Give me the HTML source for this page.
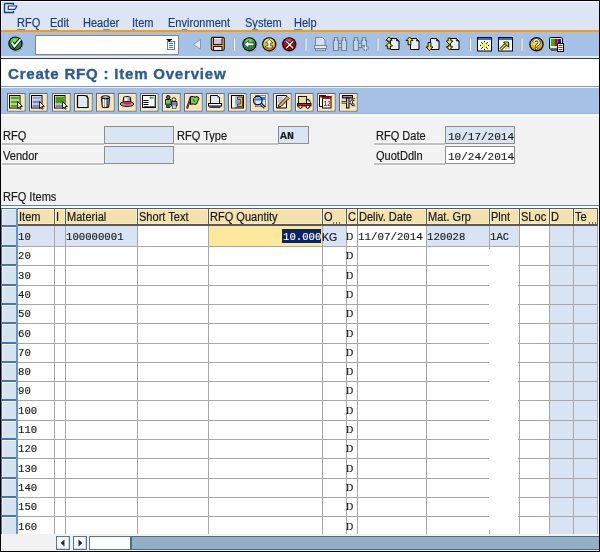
<!DOCTYPE html>
<html><head><meta charset="utf-8">
<style>
*{margin:0;padding:0;box-sizing:border-box}
html,body{width:600px;height:552px;overflow:hidden;background:#000}
body{position:relative;will-change:transform;font-family:"Liberation Sans",sans-serif;font-size:11px;color:#1a1a1a}
.a{position:absolute}
.t{position:absolute;white-space:nowrap;line-height:13px;font-size:12px;transform:scaleX(.92);transform-origin:0 0;-webkit-text-stroke:0.2px currentColor}
.m{font-family:"Liberation Mono",monospace;transform:none;-webkit-text-stroke:0.15px currentColor}
.ell{font-size:7px;letter-spacing:-0.2px}
.menu{color:#1d3f7d}
.menu u{text-decoration:none;position:relative}
.menu u:after{content:"";position:absolute;left:0;right:0;top:13px;height:1px;background:#6a8cc0}
.btn{position:absolute;top:93px;width:19px;height:18px;background:#f5e3b5;border:1px solid #8a8470}
.btn svg{position:absolute;left:0;top:0}
.sep{position:absolute;top:38px;width:2px;height:13px;background:linear-gradient(90deg,#e8eef6 50%,#c9d8ec 50%)}
.lbl{position:absolute;height:2px;background:#c0c0c0;box-shadow:0 -1px 0 #f8f8f8,0 1px 0 #f8f8f8}
.fld{position:absolute;height:18px;background:#d9e5f3;border:1px solid #8e8e8e}
.hc{position:absolute;top:208px;height:18px;background:#f4e3b3;border-top:1px solid #5a5a5a;border-bottom:1px solid #5a5a5a;border-right:1px solid #5a5a5a;box-shadow:inset 1px 1px 0 #fff3d2}
</style></head><body>
<!-- window background -->
<div class="a" style="left:1px;top:1px;width:598px;height:550px;background:#f2f2f2"></div>
<!-- menubar -->
<div class="a" style="left:1px;top:1px;width:598px;height:29px;background:#dbe5f3;border-left:1px solid #f4f8fc;border-top:1px solid #f4f8fc"></div>
<svg class="a" style="left:0;top:0" width="20" height="16" viewBox="0 0 20 16">
<path d="M4.5 3.5h9v1.8M4.5 3.5v9h9v-1.8" fill="none" stroke="#163c8c" stroke-width="1.3"/>
<path d="M8.3 6h8.7l-2.2 3.4h-6.5z" fill="#fff" stroke="#163c8c" stroke-width="1.2" stroke-linejoin="round"/>
</svg>
<div class="t menu" style="left:17px;top:17px"><u>R</u>FQ</div>
<div class="t menu" style="left:50px;top:17px"><u>E</u>dit</div>
<div class="t menu" style="left:83px;top:17px">Hea<u>d</u>er</div>
<div class="t menu" style="left:132px;top:17px"><u>I</u>tem</div>
<div class="t menu" style="left:168px;top:17px">En<u>v</u>ironment</div>
<div class="t menu" style="left:245px;top:17px">S<u>y</u>stem</div>
<div class="t menu" style="left:294px;top:17px"><u>H</u>elp</div>
<!-- orange line -->
<div class="a" style="left:1px;top:30px;width:598px;height:2px;background:#fb9a0c"></div>
<!-- system toolbar -->
<div class="a" style="left:1px;top:32px;width:598px;height:24px;background:#a5c1e5"></div>
<div class="a" style="left:1px;top:56px;width:598px;height:2px;background:#e6eef8"></div>
<div class="a" style="left:1px;top:58px;width:598px;height:1px;background:#3a3a3a"></div>
<!-- title area -->
<div class="a" style="left:1px;top:59px;width:598px;height:27px;background:#fff"></div>
<div class="t" style="left:8px;top:66px;font-size:15px;line-height:16px;font-weight:bold;color:#2b5b90;transform:none;letter-spacing:0.8px;-webkit-text-stroke:0.35px #2b5b90">Create RFQ : Item Overview</div>
<div class="a" style="left:1px;top:86px;width:598px;height:1px;background:#7f9ebf"></div><div class="a" style="left:1px;top:87px;width:598px;height:1px;background:#f2f6fb"></div>
<!-- app toolbar -->
<div class="a" style="left:1px;top:88px;width:598px;height:26px;background:#a5c1e5"></div>
<div class="a" style="left:1px;top:113px;width:598px;height:1px;background:#97b6dc"></div><div class="a" style="left:1px;top:114px;width:598px;height:2px;background:#f7f9fc"></div>

<!-- header fields -->
<div class="t" style="left:3px;top:130px">RFQ</div>
<div class="lbl" style="left:2px;top:143px;width:102px"></div>
<div class="fld" style="left:104px;top:126px;width:70px"></div>
<div class="t" style="left:177px;top:130px">RFQ Type</div>
<div class="lbl" style="left:174px;top:143px;width:104px"></div>
<div class="fld" style="left:278px;top:126px;width:31px"></div>
<div class="t m" style="left:280px;top:129px;font-size:11.5px;font-weight:bold">AN</div>
<div class="t" style="left:3px;top:150px">Vendor</div>
<div class="lbl" style="left:2px;top:163px;width:102px"></div>
<div class="fld" style="left:104px;top:146px;width:70px"></div>

<div class="t" style="left:376px;top:130px">RFQ Date</div>
<div class="lbl" style="left:374px;top:143px;width:71px"></div>
<div class="fld" style="left:445px;top:126px;width:70px"></div>
<div class="t m" style="left:448px;top:131px;font-size:11px">10/17/2014</div>
<div class="t" style="left:376px;top:150px">QuotDdln</div>
<div class="lbl" style="left:374px;top:163px;width:71px"></div>
<div class="fld" style="left:445px;top:146px;width:70px;background:#fff"></div>
<div class="t m" style="left:448px;top:151px;font-size:11px">10/24/2014</div>

<div class="t" style="left:3px;top:191px">RFQ Items</div>

<!-- table -->
<svg class="a" style="left:0;top:32px" width="600" height="26" viewBox="0 32 600 26">
<defs>
<radialGradient id="gG" cx="0.45" cy="0.25" r="0.8"><stop offset="0" stop-color="#8ef05a"/><stop offset="0.45" stop-color="#2fb52c"/><stop offset="1" stop-color="#0d6a4a"/></radialGradient>
<radialGradient id="gY" cx="0.45" cy="0.25" r="0.8"><stop offset="0" stop-color="#fffa9a"/><stop offset="0.45" stop-color="#f6d20a"/><stop offset="1" stop-color="#d07a00"/></radialGradient>
<radialGradient id="gR" cx="0.45" cy="0.25" r="0.8"><stop offset="0" stop-color="#ff6a6a"/><stop offset="0.45" stop-color="#e00010"/><stop offset="1" stop-color="#900010"/></radialGradient>
</defs>

<!-- enter -->
<circle cx="16.6" cy="44.8" r="7" fill="#9c94cc" opacity="0.75"/>
<circle cx="15.4" cy="43.6" r="7.1" fill="#000"/>
<circle cx="15.4" cy="43.6" r="6" fill="url(#gG)"/>
<path d="M11.8 42.5l2.6 3.8 6.2-7" fill="none" stroke="#000" stroke-width="3.6"/>
<path d="M11.8 42.5l2.6 3.8 6.2-7" fill="none" stroke="#fff" stroke-width="2"/>
<!-- command field -->
<rect x="35.5" y="35.5" width="143" height="19" fill="#fff" stroke="#8a847e"/>
<rect x="167.5" y="41.5" width="7" height="8" fill="#f4f8fc" stroke="#6284aa"/>
<path d="M169 43.5h4M169 45.5h4M169 47.5h4" stroke="#4f78a8" stroke-width="1"/>
<path d="M166 39h6.5l-3.25 3z" fill="#000"/>
<!-- collapse -->
<path d="M200.5 39.5v9.8l-7-4.9z" fill="#e4e8ee" stroke="#8c98a6" stroke-width="1"/>
<!-- save -->
<rect x="210.8" y="36.8" width="14" height="14" rx="2" fill="#111"/>
<rect x="211.8" y="37.8" width="12" height="12" rx="1" fill="#f8a818"/>
<rect x="213.5" y="37.5" width="8.5" height="7" fill="#d2bfe2" stroke="#111" stroke-width="1"/>
<rect x="214" y="38" width="7.5" height="1" fill="#f4eefa"/>
<rect x="213.5" y="46.5" width="8.5" height="4" fill="#ede2f4" stroke="#111" stroke-width="1"/>
<!-- sep -->
<rect x="233" y="38.6" width="1" height="12.4" fill="#b9aa9a"/><rect x="234" y="38.6" width="1" height="12.4" fill="#fafafa"/>
<!-- back -->
<circle cx="250.5" cy="45.3" r="7" fill="#9c94cc" opacity="0.6"/>
<circle cx="249.4" cy="44.3" r="7.1" fill="#000"/>
<circle cx="249.4" cy="44.3" r="6" fill="url(#gG)"/>
<path d="M244.5 44.3l4.2-4v2.6h5.2v2.8h-5.2v2.6z" fill="#fff" stroke="#000" stroke-width="0.6"/>
<!-- exit -->
<circle cx="270.3" cy="45.3" r="7" fill="#9c94cc" opacity="0.6"/>
<circle cx="269.2" cy="44.3" r="7.1" fill="#000"/>
<circle cx="269.2" cy="44.3" r="6" fill="url(#gY)"/>
<path d="M269.2 39.3l3.6 3.6h-2.2v3h2v2h-6.8v-2h2v-3h-2.2z" fill="#fff" stroke="#000" stroke-width="0.6"/>
<!-- cancel -->
<circle cx="290.3" cy="45.3" r="7" fill="#9c94cc" opacity="0.6"/>
<circle cx="289.2" cy="44.3" r="7.1" fill="#000"/>
<circle cx="289.2" cy="44.3" r="6" fill="url(#gR)"/>
<path d="M286.2 41.3l7 7M293.2 41.3l-7 7" stroke="#000" stroke-width="3"/>
<path d="M286.2 41.3l7 7M293.2 41.3l-7 7" stroke="#fff" stroke-width="1.5"/>
<!-- sep -->
<rect x="304.5" y="38.6" width="1" height="12.4" fill="#b9aa9a"/><rect x="305.5" y="38.6" width="1" height="12.4" fill="#fafafa"/>
<!-- print disabled -->
<path d="M315.5 37.5h7l2.5 2.5v5.5h-9.5z" fill="#d6def0" stroke="#6c8a98"/>
<rect x="314.5" y="45.5" width="12" height="3" fill="#e4eaf4" stroke="#6c8a98"/>
<rect x="315.5" y="48.5" width="10" height="2" fill="#c4d0e4" stroke="#6c8a98"/>
<!-- find disabled -->
<g fill="#c8d6ee" stroke="#6a8896" stroke-width="1.2">
<path d="M334.5 37.5h3v3h1v10h-5v-10h1z"/><path d="M342.5 37.5h3v3h1v10h-5v-10h1z"/><rect x="338.5" y="43.5" width="3" height="4"/>
<path d="M354.5 37.5h3v3h1v10h-5v-10h1z"/><path d="M362.5 37.5h3v3h1v5h-5v-5h1z"/><rect x="358.5" y="43.5" width="3" height="4"/>
</g>
<path d="M365.5 45v6M362.5 48h6" stroke="#6a8896" stroke-width="3"/>
<path d="M365.5 45.5v5M363 48h5" stroke="#eef2f8" stroke-width="1.2"/>
<!-- sep -->
<rect x="376.5" y="38.6" width="1" height="12.4" fill="#b9aa9a"/><rect x="377.5" y="38.6" width="1" height="12.4" fill="#fafafa"/>
<!-- page icons -->
<g stroke="#000" stroke-width="1">
<path d="M390.5 38.5h6l2.5 2.5v8.5h-8.5z" fill="#e6eef8"/><path d="M396.5 38.5v2.5h2.5" fill="#334" stroke-width="0.6"/>
<path d="M410.5 38.5h6l2.5 2.5v8.5h-8.5z" fill="#e6eef8"/><path d="M416.5 38.5v2.5h2.5" fill="#334" stroke-width="0.6"/>
<path d="M430.5 38.5h6l2.5 2.5v8.5h-8.5z" fill="#e6eef8"/><path d="M436.5 38.5v2.5h2.5" fill="#334" stroke-width="0.6"/>
<path d="M450.5 38.5h6l2.5 2.5v8.5h-8.5z" fill="#e6eef8"/><path d="M456.5 38.5v2.5h2.5" fill="#334" stroke-width="0.6"/>
</g>
<g fill="#ffe600" stroke="#000" stroke-width="0.9" stroke-linejoin="round">
<path d="M389 37l3.2 3.2h-2v1.8h-2.4v-1.8h-2z"/>
<path d="M389 42.5l3.5 3.5h-2.1v2.8h-2.8v-2.8h-2.1z"/>
<path d="M409.5 37l3.5 3.5h-2.1v4.3h-2.8v-4.3h-2.1z"/>
<path d="M429.5 50.5l3.5-3.5h-2.1v-4.5h-2.8v4.5h-2.1z"/>
<path d="M449.5 50l3.2-3.2h-2v-1.8h-2.4v1.8h-2z"/>
<path d="M449.5 44.5l3.5-3.5h-2.1v-2.8h-2.8v2.8h-2.1z"/>
</g>
<!-- sep -->
<rect x="469" y="38.6" width="1" height="12.4" fill="#b9aa9a"/><rect x="470" y="38.6" width="1" height="12.4" fill="#fafafa"/>
<!-- create session -->
<rect x="477.5" y="37.5" width="14" height="13.5" fill="#fff" stroke="#000"/>
<rect x="478" y="38" width="13" height="2" fill="#2e6fd0"/>
<path d="M484.5 41v9M480 45.5h9M481.3 42.3l6.4 6.4M487.7 42.3l-6.4 6.4" stroke="#111" stroke-width="1"/>
<path d="M484.5 42v7M481 45.5h7" stroke="#f8e800" stroke-width="1.4"/>
<circle cx="484.5" cy="45.5" r="2.2" fill="#fff000"/>
<!-- shortcut -->
<rect x="498.5" y="37.5" width="14" height="13.5" fill="#fff" stroke="#000"/>
<rect x="499" y="38" width="13" height="2" fill="#2e6fd0"/>
<rect x="505" y="43" width="5" height="6" fill="#cfcfcf"/>
<path d="M500.5 49.5l6-6" stroke="#000" stroke-width="3"/>
<path d="M500.5 49.5l6-6" stroke="#f4e400" stroke-width="1.6"/>
<path d="M503.5 42h5v5z" fill="#f4e400" stroke="#000" stroke-width="0.8"/>
<!-- sep -->
<rect x="520.5" y="38.6" width="1" height="12.4" fill="#b9aa9a"/><rect x="521.5" y="38.6" width="1" height="12.4" fill="#fafafa"/>
<!-- help -->
<circle cx="536.5" cy="44.3" r="7.2" fill="#000"/>
<circle cx="536.5" cy="44.3" r="6" fill="url(#gY)"/>
<path d="M533.8 42.3a2.7 2.5 0 1 1 4 2.2c-1 .6-1.3 1-1.3 2" fill="none" stroke="#000" stroke-width="2.8"/>
<path d="M533.8 42.3a2.7 2.5 0 1 1 4 2.2c-1 .6-1.3 1-1.3 2" fill="none" stroke="#fff" stroke-width="1.5"/>
<rect x="535.5" y="47.8" width="2" height="2" fill="#fff" stroke="#000" stroke-width="0.5"/>
<!-- customize -->
<rect x="549.5" y="37.5" width="13" height="11.5" rx="1" fill="#e6e6e6" stroke="#000"/>
<rect x="551" y="39" width="3.3" height="7" fill="#00d000"/>
<rect x="554.3" y="39" width="3.3" height="7" fill="#e00000"/>
<rect x="557.6" y="39" width="3.4" height="7" fill="#0020e0"/>
<rect x="551" y="49" width="10" height="2" fill="#555"/>
<rect x="557.5" y="43.5" width="6" height="8" fill="#fff" stroke="#000"/>
<path d="M558.5 45.5h4M558.5 47.5h4M558.5 49.5h4" stroke="#333" stroke-width="0.9"/>
</svg>
<svg class="a" style="left:0;top:86px" width="600" height="30" viewBox="0 86 600 30">
<g transform="translate(7,93)"><rect x="0.5" y="0.5" width="17.5" height="17.5" fill="#f6e3b3" stroke="#6f6a5c"/><rect x="1.5" y="1.5" width="15.5" height="15.5" fill="none" stroke="#fcf1d4" stroke-width="1"/><rect x="2.5" y="2.5" width="10.5" height="12.5" fill="#fff" stroke="#000"/>
<rect x="3.5" y="3.5" width="8.5" height="3" fill="#5aa814"/><rect x="3.5" y="7.5" width="8.5" height="3" fill="#5aa814"/><rect x="3.5" y="11.5" width="8.5" height="2.5" fill="#5aa814"/>
<path d="M10.5 8.5l5 5h-2.5l1.2 2.2-1 .6-1.3-2.2-1.4 1.5z" fill="#eee" stroke="#000" stroke-width="0.8"/></g>
<g transform="translate(29,93)"><rect x="0.5" y="0.5" width="17.5" height="17.5" fill="#f6e3b3" stroke="#6f6a5c"/><rect x="1.5" y="1.5" width="15.5" height="15.5" fill="none" stroke="#fcf1d4" stroke-width="1"/><rect x="2.5" y="2.5" width="10.5" height="12.5" fill="#fff" stroke="#000"/>
<rect x="3.5" y="3.5" width="8.5" height="3" fill="#9ea4d6"/><rect x="3.5" y="7.5" width="8.5" height="3" fill="#7c84c4"/><rect x="3.5" y="11.5" width="8.5" height="2.5" fill="#7c84c4"/>
<path d="M10.5 8.5l5 5h-2.5l1.2 2.2-1 .6-1.3-2.2-1.4 1.5z" fill="#eee" stroke="#000" stroke-width="0.8"/></g>
<g transform="translate(52,93)"><rect x="0.5" y="0.5" width="17.5" height="17.5" fill="#f6e3b3" stroke="#6f6a5c"/><rect x="1.5" y="1.5" width="15.5" height="15.5" fill="none" stroke="#fcf1d4" stroke-width="1"/><rect x="2.5" y="2.5" width="10.5" height="12.5" fill="#fff" stroke="#000"/>
<rect x="3.5" y="3.5" width="8.5" height="7" fill="#4e9a10"/><rect x="3.5" y="11.5" width="8.5" height="2.5" fill="#7c84c4"/>
<path d="M10.5 8.5l5 5h-2.5l1.2 2.2-1 .6-1.3-2.2-1.4 1.5z" fill="#eee" stroke="#000" stroke-width="0.8"/></g>
<g transform="translate(74,93)"><rect x="0.5" y="0.5" width="17.5" height="17.5" fill="#f6e3b3" stroke="#6f6a5c"/><rect x="1.5" y="1.5" width="15.5" height="15.5" fill="none" stroke="#fcf1d4" stroke-width="1"/><path d="M3.5 2.5h8l2.5 2.5v9.5h-10.5z" fill="#dcebf8" stroke="#000" stroke-width="1.2"/><path d="M11.3 2.5l2.7 2.7v-2.7z" fill="#2a2a50"/></g>
<g transform="translate(96,93)"><rect x="0.5" y="0.5" width="17.5" height="17.5" fill="#f6e3b3" stroke="#6f6a5c"/><rect x="1.5" y="1.5" width="15.5" height="15.5" fill="none" stroke="#fcf1d4" stroke-width="1"/><path d="M5.5 5.5l.8 8.8h6.4l.8-8.8z" fill="#9ea4bc" stroke="#000"/><path d="M7.5 6v8" stroke="#fff" stroke-width="1.2"/><path d="M9.5 6v8" stroke="#e8ecf4" stroke-width="1"/><path d="M11.3 6v8" stroke="#445" stroke-width="1"/><ellipse cx="9.5" cy="4.3" rx="4.3" ry="1.5" fill="#6a7090" stroke="#000"/><ellipse cx="9.5" cy="4" rx="2.5" ry="0.7" fill="#c8d0e0"/></g>
<g transform="translate(118,93)"><rect x="0.5" y="0.5" width="17.5" height="17.5" fill="#f6e3b3" stroke="#6f6a5c"/><rect x="1.5" y="1.5" width="15.5" height="15.5" fill="none" stroke="#fcf1d4" stroke-width="1"/><path d="M5.5 4.5c0-1.2 7-1.2 7 0l.4 7h-7.8z" fill="#c8cce8" stroke="#000"/><rect x="7" y="4.5" width="2" height="5" fill="#fff"/><rect x="10.5" y="5" width="1.5" height="5" fill="#8a8cc0"/><ellipse cx="9" cy="11" rx="6.8" ry="2.4" fill="#9ea8d8" stroke="#000"/><path d="M5.3 9.3h7.6v1.8c-2.5.8-5 .8-7.6 0z" fill="#ff1414"/></g>
<g transform="translate(140,93)"><rect x="0.5" y="0.5" width="17.5" height="17.5" fill="#f6e3b3" stroke="#6f6a5c"/><rect x="1.5" y="1.5" width="15.5" height="15.5" fill="none" stroke="#fcf1d4" stroke-width="1"/><rect x="2.5" y="2.5" width="13" height="12" fill="#fff" stroke="#000"/><path d="M3.5 13.5h11.5v-10" stroke="#4060a0" stroke-width="1" fill="none"/><path d="M3.5 7.5h5M3.5 9.5h5M3.5 11.5h5" stroke="#000" stroke-width="1"/><circle cx="10.8" cy="4.8" r="1.2" fill="#1a9aa0"/><circle cx="12.6" cy="4.8" r="1.2" fill="#a8a060"/></g>
<g transform="translate(162,93)"><rect x="0.5" y="0.5" width="17.5" height="17.5" fill="#f6e3b3" stroke="#6f6a5c"/><rect x="1.5" y="1.5" width="15.5" height="15.5" fill="none" stroke="#fcf1d4" stroke-width="1"/><circle cx="6.2" cy="4.2" r="1.8" fill="#8a5a20" stroke="#000" stroke-width="0.8"/><path d="M3.5 6.5h5.5v5h-1v3h-3.5v-3h-1z" fill="#6fcf4a" stroke="#000" stroke-width="0.8"/><rect x="4.5" y="10.5" width="3.5" height="3.5" fill="#3a4a9a"/>
<circle cx="12" cy="6.5" r="1.8" fill="#ffe0c0" stroke="#000" stroke-width="0.8"/><path d="M9.5 8.5h5.5v4.5h-1v2.5h-3.5v-2.5h-1z" fill="#7080d0" stroke="#000" stroke-width="0.8"/><rect x="10.7" y="12.5" width="3" height="3" fill="#f4e090"/></g>
<g transform="translate(184,93)"><rect x="0.5" y="0.5" width="17.5" height="17.5" fill="#f6e3b3" stroke="#6f6a5c"/><rect x="1.5" y="1.5" width="15.5" height="15.5" fill="none" stroke="#fcf1d4" stroke-width="1"/><path d="M3 15.5l4-12" stroke="#000" stroke-width="2"/><path d="M3 15.5l4-12" stroke="#7a8090" stroke-width="0.8"/>
<path d="M6.5 4c2-1.5 4 1 6.5-.5l2 1.5-2.5 6c-2 1-4-1-6 .5z" fill="#7ccf50" stroke="#000" stroke-width="1"/><path d="M9 6l2 3" stroke="#4a8a20" stroke-width="1.5"/></g>
<g transform="translate(206,93)"><rect x="0.5" y="0.5" width="17.5" height="17.5" fill="#f6e3b3" stroke="#6f6a5c"/><rect x="1.5" y="1.5" width="15.5" height="15.5" fill="none" stroke="#fcf1d4" stroke-width="1"/><path d="M4.5 2.5h7l2 2v6h-9z" fill="#dcebf8" stroke="#000"/><path d="M11.5 2.5v2h2z" fill="#223"/><rect x="2.5" y="10.5" width="13" height="2.5" fill="#fff" stroke="#000"/><rect x="3.5" y="13" width="11" height="2" fill="#3a3a6a"/></g>
<g transform="translate(228,93)"><rect x="0.5" y="0.5" width="17.5" height="17.5" fill="#f6e3b3" stroke="#6f6a5c"/><rect x="1.5" y="1.5" width="15.5" height="15.5" fill="none" stroke="#fcf1d4" stroke-width="1"/><rect x="3.5" y="2.5" width="12" height="12.5" fill="#b4c2e2" stroke="#000"/><rect x="4" y="3" width="3" height="11.5" fill="#eef4fc"/><path d="M9.5 4h5v9.5h-5v-2.5h2.8v-4.5h-2.8z" fill="#f6b030" stroke="#2a2a2a" stroke-width="0.8"/><ellipse cx="9" cy="8.8" rx="2.2" ry="1.8" fill="#7f9ad0"/></g>
<g transform="translate(250,93)"><rect x="0.5" y="0.5" width="17.5" height="17.5" fill="#f6e3b3" stroke="#6f6a5c"/><rect x="1.5" y="1.5" width="15.5" height="15.5" fill="none" stroke="#fcf1d4" stroke-width="1"/><rect x="5.5" y="2.5" width="10" height="11" fill="#dfe6f4" stroke="#7c86a8"/><rect x="6" y="4" width="9" height="3" fill="#2a8ae8"/><circle cx="7.8" cy="7.5" r="4.3" fill="#dce8f8" fill-opacity="0.5" stroke="#000" stroke-width="1.2"/><path d="M4.5 6.5h6.5" stroke="#2a8ae8" stroke-width="2"/><path d="M10.8 10.8l4 4" stroke="#000" stroke-width="2.8"/><path d="M10.8 10.8l4 4" stroke="#a8a8d0" stroke-width="1.2"/></g>
<g transform="translate(273,93)"><rect x="0.5" y="0.5" width="17.5" height="17.5" fill="#f6e3b3" stroke="#6f6a5c"/><rect x="1.5" y="1.5" width="15.5" height="15.5" fill="none" stroke="#fcf1d4" stroke-width="1"/><path d="M3.5 2.5h10v12.5h-10z" fill="#e4ecf8" stroke="#000"/><path d="M5 5h5M5 7h5M5 9h4" stroke="#8090b0" stroke-width="0.8"/><path d="M5 14.5l1-3 8-8 2 2-8 8z" fill="#f8a820" stroke="#000" stroke-width="0.9"/><path d="M13.5 4l2 2" stroke="#e090a0" stroke-width="1.5"/></g>
<g transform="translate(295,93)"><rect x="0.5" y="0.5" width="17.5" height="17.5" fill="#f6e3b3" stroke="#6f6a5c"/><rect x="1.5" y="1.5" width="15.5" height="15.5" fill="none" stroke="#fcf1d4" stroke-width="1"/><rect x="3.5" y="3.5" width="8" height="7" fill="#f4dc98" stroke="#000" stroke-width="0.9"/><path d="M11.5 6.5h2.5l1.5 3v1h-4z" fill="#fff" stroke="#000" stroke-width="0.9"/><rect x="12.5" y="7" width="1.5" height="2" fill="#90a8e0"/>
<rect x="2.5" y="10.5" width="13.5" height="2.5" fill="#e8101a" stroke="#000" stroke-width="0.9"/><circle cx="5.5" cy="13.8" r="1.6" fill="#fff" stroke="#000"/><circle cx="12.8" cy="13.8" r="1.6" fill="#fff" stroke="#000"/></g>
<g transform="translate(317,93)"><rect x="0.5" y="0.5" width="17.5" height="17.5" fill="#f6e3b3" stroke="#6f6a5c"/><rect x="1.5" y="1.5" width="15.5" height="15.5" fill="none" stroke="#fcf1d4" stroke-width="1"/><rect x="2.5" y="2.5" width="6" height="11" fill="#fff" stroke="#000"/><rect x="2.5" y="2.5" width="6" height="2" fill="#b01010"/><rect x="5.5" y="3.5" width="8.5" height="11.5" fill="#fff" stroke="#000"/><rect x="5.5" y="3.5" width="8.5" height="2.5" fill="#c01010"/>
<text x="6.6" y="12.8" font-family="Liberation Sans" font-weight="bold" font-size="6.5" fill="#c01010">12</text></g>
<g transform="translate(339,93)"><rect x="0.5" y="0.5" width="17.5" height="17.5" fill="#f6e3b3" stroke="#6f6a5c"/><rect x="1.5" y="1.5" width="15.5" height="15.5" fill="none" stroke="#fcf1d4" stroke-width="1"/><rect x="3.5" y="2.5" width="10" height="2.5" fill="#8a90c8" stroke="#000"/><rect x="7.5" y="5" width="2.5" height="10" fill="#f0c870" stroke="#000"/><path d="M2.5 9.2h5" stroke="#000" stroke-width="2.6"/><path d="M2.5 9.2h5" stroke="#fff" stroke-width="1"/>
<path d="M10 9.2h3M16 6.5a2.8 2.8 0 1 0 0 5.4" fill="none" stroke="#000" stroke-width="2.4"/><path d="M10 9.2h3M16 6.5a2.8 2.8 0 1 0 0 5.4" fill="none" stroke="#fff" stroke-width="0.9"/></g>
</svg><div class="a" style="left:1px;top:205px;width:598px;height:1px;background:#5584b6;"></div>
<div class="a" style="left:1px;top:206px;width:597px;height:2px;background:#fbfcfe;"></div>
<div class="a" style="left:18px;top:226px;width:580px;height:308px;background:#ffffff;"></div>
<div class="a" style="left:549px;top:226px;width:48px;height:308px;background:#d8e4f3;"></div>
<div class="a" style="left:18px;top:226px;width:190px;height:20px;background:#d8e4f3;"></div>
<div class="a" style="left:208px;top:226px;width:114px;height:20px;background:#fde89c;"></div>
<div class="a" style="left:322px;top:226px;width:24px;height:20px;background:#d8e4f3;"></div>
<div class="a" style="left:426px;top:226px;width:93px;height:20px;background:#d8e4f3;"></div>
<div class="a" style="left:137px;top:226px;width:71px;height:20px;background:#ffffff;"></div>
<div class="a" style="left:346px;top:226px;width:80px;height:20px;background:#ffffff;"></div>
<div class="a" style="left:18px;top:246px;width:579px;height:1px;background:#a8a8a8;"></div>
<div class="a" style="left:18px;top:265px;width:471px;height:1px;background:#a8a8a8;"></div>
<div class="a" style="left:518px;top:265px;width:79px;height:1px;background:#a8a8a8;"></div>
<div class="a" style="left:18px;top:285px;width:471px;height:1px;background:#a8a8a8;"></div>
<div class="a" style="left:518px;top:285px;width:79px;height:1px;background:#a8a8a8;"></div>
<div class="a" style="left:18px;top:304px;width:471px;height:1px;background:#a8a8a8;"></div>
<div class="a" style="left:518px;top:304px;width:79px;height:1px;background:#a8a8a8;"></div>
<div class="a" style="left:18px;top:323px;width:471px;height:1px;background:#a8a8a8;"></div>
<div class="a" style="left:518px;top:323px;width:79px;height:1px;background:#a8a8a8;"></div>
<div class="a" style="left:18px;top:343px;width:471px;height:1px;background:#a8a8a8;"></div>
<div class="a" style="left:518px;top:343px;width:79px;height:1px;background:#a8a8a8;"></div>
<div class="a" style="left:18px;top:362px;width:471px;height:1px;background:#a8a8a8;"></div>
<div class="a" style="left:518px;top:362px;width:79px;height:1px;background:#a8a8a8;"></div>
<div class="a" style="left:18px;top:381px;width:471px;height:1px;background:#a8a8a8;"></div>
<div class="a" style="left:518px;top:381px;width:79px;height:1px;background:#a8a8a8;"></div>
<div class="a" style="left:18px;top:400px;width:471px;height:1px;background:#a8a8a8;"></div>
<div class="a" style="left:518px;top:400px;width:79px;height:1px;background:#a8a8a8;"></div>
<div class="a" style="left:18px;top:420px;width:471px;height:1px;background:#a8a8a8;"></div>
<div class="a" style="left:518px;top:420px;width:79px;height:1px;background:#a8a8a8;"></div>
<div class="a" style="left:18px;top:439px;width:471px;height:1px;background:#a8a8a8;"></div>
<div class="a" style="left:518px;top:439px;width:79px;height:1px;background:#a8a8a8;"></div>
<div class="a" style="left:18px;top:458px;width:471px;height:1px;background:#a8a8a8;"></div>
<div class="a" style="left:518px;top:458px;width:79px;height:1px;background:#a8a8a8;"></div>
<div class="a" style="left:18px;top:478px;width:471px;height:1px;background:#a8a8a8;"></div>
<div class="a" style="left:518px;top:478px;width:79px;height:1px;background:#a8a8a8;"></div>
<div class="a" style="left:18px;top:497px;width:471px;height:1px;background:#a8a8a8;"></div>
<div class="a" style="left:518px;top:497px;width:79px;height:1px;background:#a8a8a8;"></div>
<div class="a" style="left:18px;top:516px;width:471px;height:1px;background:#a8a8a8;"></div>
<div class="a" style="left:518px;top:516px;width:79px;height:1px;background:#a8a8a8;"></div>
<div class="a" style="left:54px;top:226px;width:1px;height:308px;background:#a8a8a8;"></div>
<div class="a" style="left:65px;top:226px;width:1px;height:308px;background:#a8a8a8;"></div>
<div class="a" style="left:137px;top:226px;width:1px;height:308px;background:#a8a8a8;"></div>
<div class="a" style="left:208px;top:226px;width:1px;height:308px;background:#a8a8a8;"></div>
<div class="a" style="left:322px;top:226px;width:1px;height:308px;background:#a8a8a8;"></div>
<div class="a" style="left:346px;top:226px;width:1px;height:308px;background:#a8a8a8;"></div>
<div class="a" style="left:357px;top:226px;width:1px;height:308px;background:#a8a8a8;"></div>
<div class="a" style="left:426px;top:226px;width:1px;height:308px;background:#a8a8a8;"></div>
<div class="a" style="left:489px;top:226px;width:1px;height:20px;background:#a8a8a8;"></div>
<div class="a" style="left:489px;top:246px;width:1px;height:3px;background:#a8a8a8;"></div>
<div class="a" style="left:519px;top:226px;width:1px;height:308px;background:#a8a8a8;"></div>
<div class="a" style="left:549px;top:226px;width:1px;height:308px;background:#a8a8a8;"></div>
<div class="a" style="left:573px;top:226px;width:1px;height:308px;background:#a8a8a8;"></div>
<div class="a" style="left:597px;top:226px;width:1px;height:308px;background:#a8a8a8;"></div>
<div class="a" style="left:489px;top:530px;width:1px;height:4px;background:#a8a8a8;"></div>
<div class="a" style="left:1px;top:208px;width:597px;height:18px;background:#5a5a5a;"></div>
<div class="a" style="left:18px;top:209px;width:36px;height:15px;background:#f3e1ae;box-shadow:inset 1px 1px 0 #fff4d4, inset -1px -1px 0 #fbecc4"></div>
<div class="a" style="left:55px;top:209px;width:10px;height:15px;background:#f3e1ae;box-shadow:inset 1px 1px 0 #fff4d4, inset -1px -1px 0 #fbecc4"></div>
<div class="a" style="left:66px;top:209px;width:71px;height:15px;background:#f3e1ae;box-shadow:inset 1px 1px 0 #fff4d4, inset -1px -1px 0 #fbecc4"></div>
<div class="a" style="left:138px;top:209px;width:70px;height:15px;background:#f3e1ae;box-shadow:inset 1px 1px 0 #fff4d4, inset -1px -1px 0 #fbecc4"></div>
<div class="a" style="left:209px;top:209px;width:113px;height:15px;background:#f3e1ae;box-shadow:inset 1px 1px 0 #fff4d4, inset -1px -1px 0 #fbecc4"></div>
<div class="a" style="left:323px;top:209px;width:23px;height:15px;background:#f3e1ae;box-shadow:inset 1px 1px 0 #fff4d4, inset -1px -1px 0 #fbecc4"></div>
<div class="a" style="left:347px;top:209px;width:10px;height:15px;background:#f3e1ae;box-shadow:inset 1px 1px 0 #fff4d4, inset -1px -1px 0 #fbecc4"></div>
<div class="a" style="left:358px;top:209px;width:68px;height:15px;background:#f3e1ae;box-shadow:inset 1px 1px 0 #fff4d4, inset -1px -1px 0 #fbecc4"></div>
<div class="a" style="left:427px;top:209px;width:62px;height:15px;background:#f3e1ae;box-shadow:inset 1px 1px 0 #fff4d4, inset -1px -1px 0 #fbecc4"></div>
<div class="a" style="left:490px;top:209px;width:29px;height:15px;background:#f3e1ae;box-shadow:inset 1px 1px 0 #fff4d4, inset -1px -1px 0 #fbecc4"></div>
<div class="a" style="left:520px;top:209px;width:29px;height:15px;background:#f3e1ae;box-shadow:inset 1px 1px 0 #fff4d4, inset -1px -1px 0 #fbecc4"></div>
<div class="a" style="left:550px;top:209px;width:23px;height:15px;background:#f3e1ae;box-shadow:inset 1px 1px 0 #fff4d4, inset -1px -1px 0 #fbecc4"></div>
<div class="a" style="left:574px;top:209px;width:23px;height:15px;background:#f3e1ae;box-shadow:inset 1px 1px 0 #fff4d4, inset -1px -1px 0 #fbecc4"></div>
<div class="t" style="left:19px;top:211px;line-height:13px">Item</div>
<div class="t" style="left:56px;top:211px;line-height:13px">I</div>
<div class="t" style="left:67px;top:211px;line-height:13px">Material</div>
<div class="t" style="left:139px;top:211px;line-height:13px">Short Text</div>
<div class="t" style="left:210px;top:211px;line-height:13px">RFQ Quantity</div>
<div class="t" style="left:324px;top:211px;line-height:13px">O</div>
<div class="t" style="left:348px;top:211px;line-height:13px">C</div>
<div class="t" style="left:359px;top:211px;line-height:13px">Deliv. Date</div>
<div class="t" style="left:428px;top:211px;line-height:13px">Mat. Grp</div>
<div class="t" style="left:491px;top:211px;line-height:13px">Plnt</div>
<div class="t" style="left:521px;top:211px;line-height:13px">SLoc</div>
<div class="t" style="left:551px;top:211px;line-height:13px">D</div>
<div class="t" style="left:575px;top:211px;line-height:13px">Te</div>
<div class="a" style="left:333px;top:222px;width:1px;height:2px;background:#6a6458;"></div>
<div class="a" style="left:336px;top:222px;width:1px;height:2px;background:#6a6458;"></div>
<div class="a" style="left:339px;top:222px;width:1px;height:2px;background:#6a6458;"></div>
<div class="a" style="left:589px;top:222px;width:1px;height:2px;background:#6a6458;"></div>
<div class="a" style="left:592px;top:222px;width:1px;height:2px;background:#6a6458;"></div>
<div class="a" style="left:595px;top:222px;width:1px;height:2px;background:#6a6458;"></div>
<div class="a" style="left:1px;top:208px;width:17px;height:326px;background:#4677a8;"></div>
<div class="a" style="left:2px;top:209px;width:14px;height:16px;background:#d6e3f1;box-shadow:inset 1px 1px 0 #f3f7fc"></div>
<div class="a" style="left:16px;top:208px;width:2px;height:326px;background:#6896bf;"></div>
<div class="a" style="left:2px;top:227px;width:14px;height:18px;background:#d6e3f1;box-shadow:inset 1px 1px 0 #f3f7fc"></div>
<div class="a" style="left:2px;top:247px;width:14px;height:17px;background:#d6e3f1;box-shadow:inset 1px 1px 0 #f3f7fc"></div>
<div class="a" style="left:2px;top:266px;width:14px;height:18px;background:#d6e3f1;box-shadow:inset 1px 1px 0 #f3f7fc"></div>
<div class="a" style="left:2px;top:286px;width:14px;height:17px;background:#d6e3f1;box-shadow:inset 1px 1px 0 #f3f7fc"></div>
<div class="a" style="left:2px;top:305px;width:14px;height:17px;background:#d6e3f1;box-shadow:inset 1px 1px 0 #f3f7fc"></div>
<div class="a" style="left:2px;top:324px;width:14px;height:18px;background:#d6e3f1;box-shadow:inset 1px 1px 0 #f3f7fc"></div>
<div class="a" style="left:2px;top:344px;width:14px;height:17px;background:#d6e3f1;box-shadow:inset 1px 1px 0 #f3f7fc"></div>
<div class="a" style="left:2px;top:363px;width:14px;height:17px;background:#d6e3f1;box-shadow:inset 1px 1px 0 #f3f7fc"></div>
<div class="a" style="left:2px;top:382px;width:14px;height:17px;background:#d6e3f1;box-shadow:inset 1px 1px 0 #f3f7fc"></div>
<div class="a" style="left:2px;top:401px;width:14px;height:18px;background:#d6e3f1;box-shadow:inset 1px 1px 0 #f3f7fc"></div>
<div class="a" style="left:2px;top:421px;width:14px;height:17px;background:#d6e3f1;box-shadow:inset 1px 1px 0 #f3f7fc"></div>
<div class="a" style="left:2px;top:440px;width:14px;height:17px;background:#d6e3f1;box-shadow:inset 1px 1px 0 #f3f7fc"></div>
<div class="a" style="left:2px;top:459px;width:14px;height:18px;background:#d6e3f1;box-shadow:inset 1px 1px 0 #f3f7fc"></div>
<div class="a" style="left:2px;top:479px;width:14px;height:17px;background:#d6e3f1;box-shadow:inset 1px 1px 0 #f3f7fc"></div>
<div class="a" style="left:2px;top:498px;width:14px;height:17px;background:#d6e3f1;box-shadow:inset 1px 1px 0 #f3f7fc"></div>
<div class="a" style="left:2px;top:517px;width:14px;height:17px;background:#d6e3f1;box-shadow:inset 1px 1px 0 #f3f7fc"></div>
<div class="t m" style="left:18px;top:231px;font-size:10.67px">10</div>
<div class="t m" style="left:346px;top:230px;font-family:&quot;Liberation Serif&quot;,serif;font-size:10.5px;-webkit-text-stroke:0.15px #000;transform:scaleX(0.95);transform-origin:0 0">D</div>
<div class="t m" style="left:18px;top:250px;font-size:10.67px">20</div>
<div class="t m" style="left:346px;top:249px;font-family:&quot;Liberation Serif&quot;,serif;font-size:10.5px;-webkit-text-stroke:0.15px #000;transform:scaleX(0.95);transform-origin:0 0">D</div>
<div class="t m" style="left:18px;top:270px;font-size:10.67px">30</div>
<div class="t m" style="left:346px;top:269px;font-family:&quot;Liberation Serif&quot;,serif;font-size:10.5px;-webkit-text-stroke:0.15px #000;transform:scaleX(0.95);transform-origin:0 0">D</div>
<div class="t m" style="left:18px;top:289px;font-size:10.67px">40</div>
<div class="t m" style="left:346px;top:288px;font-family:&quot;Liberation Serif&quot;,serif;font-size:10.5px;-webkit-text-stroke:0.15px #000;transform:scaleX(0.95);transform-origin:0 0">D</div>
<div class="t m" style="left:18px;top:308px;font-size:10.67px">50</div>
<div class="t m" style="left:346px;top:307px;font-family:&quot;Liberation Serif&quot;,serif;font-size:10.5px;-webkit-text-stroke:0.15px #000;transform:scaleX(0.95);transform-origin:0 0">D</div>
<div class="t m" style="left:18px;top:328px;font-size:10.67px">60</div>
<div class="t m" style="left:346px;top:327px;font-family:&quot;Liberation Serif&quot;,serif;font-size:10.5px;-webkit-text-stroke:0.15px #000;transform:scaleX(0.95);transform-origin:0 0">D</div>
<div class="t m" style="left:18px;top:347px;font-size:10.67px">70</div>
<div class="t m" style="left:346px;top:346px;font-family:&quot;Liberation Serif&quot;,serif;font-size:10.5px;-webkit-text-stroke:0.15px #000;transform:scaleX(0.95);transform-origin:0 0">D</div>
<div class="t m" style="left:18px;top:366px;font-size:10.67px">80</div>
<div class="t m" style="left:346px;top:365px;font-family:&quot;Liberation Serif&quot;,serif;font-size:10.5px;-webkit-text-stroke:0.15px #000;transform:scaleX(0.95);transform-origin:0 0">D</div>
<div class="t m" style="left:18px;top:385px;font-size:10.67px">90</div>
<div class="t m" style="left:346px;top:384px;font-family:&quot;Liberation Serif&quot;,serif;font-size:10.5px;-webkit-text-stroke:0.15px #000;transform:scaleX(0.95);transform-origin:0 0">D</div>
<div class="t m" style="left:18px;top:405px;font-size:10.67px">100</div>
<div class="t m" style="left:346px;top:404px;font-family:&quot;Liberation Serif&quot;,serif;font-size:10.5px;-webkit-text-stroke:0.15px #000;transform:scaleX(0.95);transform-origin:0 0">D</div>
<div class="t m" style="left:18px;top:424px;font-size:10.67px">110</div>
<div class="t m" style="left:346px;top:423px;font-family:&quot;Liberation Serif&quot;,serif;font-size:10.5px;-webkit-text-stroke:0.15px #000;transform:scaleX(0.95);transform-origin:0 0">D</div>
<div class="t m" style="left:18px;top:443px;font-size:10.67px">120</div>
<div class="t m" style="left:346px;top:442px;font-family:&quot;Liberation Serif&quot;,serif;font-size:10.5px;-webkit-text-stroke:0.15px #000;transform:scaleX(0.95);transform-origin:0 0">D</div>
<div class="t m" style="left:18px;top:463px;font-size:10.67px">130</div>
<div class="t m" style="left:346px;top:462px;font-family:&quot;Liberation Serif&quot;,serif;font-size:10.5px;-webkit-text-stroke:0.15px #000;transform:scaleX(0.95);transform-origin:0 0">D</div>
<div class="t m" style="left:18px;top:482px;font-size:10.67px">140</div>
<div class="t m" style="left:346px;top:481px;font-family:&quot;Liberation Serif&quot;,serif;font-size:10.5px;-webkit-text-stroke:0.15px #000;transform:scaleX(0.95);transform-origin:0 0">D</div>
<div class="t m" style="left:18px;top:501px;font-size:10.67px">150</div>
<div class="t m" style="left:346px;top:500px;font-family:&quot;Liberation Serif&quot;,serif;font-size:10.5px;-webkit-text-stroke:0.15px #000;transform:scaleX(0.95);transform-origin:0 0">D</div>
<div class="t m" style="left:18px;top:521px;font-size:10.67px">160</div>
<div class="t m" style="left:346px;top:520px;font-family:&quot;Liberation Serif&quot;,serif;font-size:10.5px;-webkit-text-stroke:0.15px #000;transform:scaleX(0.95);transform-origin:0 0">D</div>
<div class="t m" style="left:66px;top:231px;font-size:10.67px">100000001</div>
<div class="a" style="left:282px;top:229px;width:39px;height:14px;background:#0a246a;"></div>
<div class="t m" style="left:283px;top:231px;font-size:10.67px;color:#fff">10.000</div>
<div class="t" style="left:322px;top:231px;font-size:11.5px">KG</div>
<div class="t m" style="left:358px;top:231px;font-size:10.8px">11/07/2014</div>
<div class="t m" style="left:427px;top:231px;font-size:10.67px">120028</div>
<div class="t m" style="left:490px;top:231px;font-size:10.67px">1AC</div>
<div class="a" style="left:1px;top:534px;width:597px;height:17px;background:#f2f2f2;"></div>
<div class="a" style="left:56px;top:536px;width:14px;height:14px;background:#fff;border:1px solid #4a78aa;box-shadow:inset -1px -1px 0 #c9d6e6"></div>
<svg class="a" style="left:56px;top:536px" width="14" height="14"><path d="M8.5 3.5v7l-4-3.5z" fill="#1c2a4a"/></svg>
<div class="a" style="left:73px;top:536px;width:14px;height:14px;background:#fff;border:1px solid #4a78aa;box-shadow:inset -1px -1px 0 #c9d6e6"></div>
<svg class="a" style="left:73px;top:536px" width="14" height="14"><path d="M5.5 3.5v7l4-3.5z" fill="#1c2a4a"/></svg>
<div class="a" style="left:89px;top:536px;width:45px;height:14px;background:#fff;border:1px solid #4a78aa;border-right:none"></div>
<div class="a" style="left:132px;top:536px;width:467px;height:14px;background:#93afc3;border-top:1px solid #3f6f9c;border-bottom:1px solid #3f6f9c;box-shadow:inset 0 1px 0 #a8aaa8"></div>
<div class="a" style="left:130px;top:536px;width:2px;height:14px;background:#3f6f9c;"></div>

</body></html>
